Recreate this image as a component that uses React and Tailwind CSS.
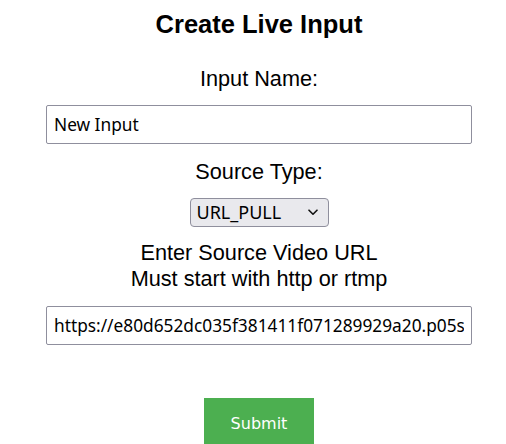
export default function App() {
  return (
    <div className="w-[506px] h-[444px] overflow-hidden bg-white pl-3 text-black">
      <div className="flex flex-col items-center pt-[9px]">
        <div className="font-['Liberation_Sans',Arial,sans-serif] font-bold text-[25.5px] leading-[30px] h-[30px]">
          Create Live Input
        </div>
        <div className="mt-[27px] font-['Liberation_Sans',Arial,sans-serif] text-[21.7px] leading-[25px] h-[25px]">
          Input Name:
        </div>
        <input
          type="text"
          defaultValue="New Input"
          className="mt-[14px] w-[426px] h-[39px] border border-[#8f8f9d] rounded-[2px] pl-[7px] pr-[7px] font-['Noto_Sans',sans-serif] text-[17.3px] text-black outline-none bg-white"
        />
        <div className="mt-[15px] font-['Liberation_Sans',Arial,sans-serif] text-[21.7px] leading-[25px] h-[25px]">
          Source Type:
        </div>
        <div className="relative mt-[14px] w-[139px] h-[29px]">
          <select
            defaultValue="URL_PULL"
            className="appearance-none w-full h-full border border-[#8f8f9d] rounded-[4px] bg-[#e9e9ed] pl-[6px] font-['Noto_Sans',sans-serif] text-[18px] leading-[27px] text-black outline-none"
          >
            <option value="URL_PULL">URL_PULL</option>
            <option value="RTMP_PUSH">RTMP_PUSH</option>
          </select>
          <svg
            className="pointer-events-none absolute right-[11px] top-[11px]"
            width="10"
            height="7"
            viewBox="0 0 10 7"
            fill="none"
          >
            <path d="M1 1.2 L5 5.2 L9 1.2" stroke="#111" strokeWidth="1.6" strokeLinecap="round" strokeLinejoin="round" />
          </svg>
        </div>
        <div className="mt-[13px] font-['Liberation_Sans',Arial,sans-serif] text-[21.7px] leading-[26px] text-center">
          <div>Enter Source Video URL</div>
          <div>Must start with http or rtmp</div>
        </div>
        <input
          type="text"
          defaultValue="https://e80d652dc035f381411f071289929a20.p05sqb.channel-assembly.mediatailor.us-west-2.amazonaws.com/v1/channel/live/index.m3u8"
          className="mt-[14px] w-[426px] h-[39px] border border-[#8f8f9d] rounded-[2px] pl-[7px] pr-[7px] font-['Noto_Sans',sans-serif] text-[17.3px] text-black outline-none bg-white"
        />
        <button
          type="button"
          className="mt-[53px] w-[110px] pt-[16px] pb-[16px] bg-[#4caf50] text-white font-['DejaVu_Sans',sans-serif] text-[16px] leading-[20px]"
        >
          Submit
        </button>
      </div>
    </div>
  );
}
